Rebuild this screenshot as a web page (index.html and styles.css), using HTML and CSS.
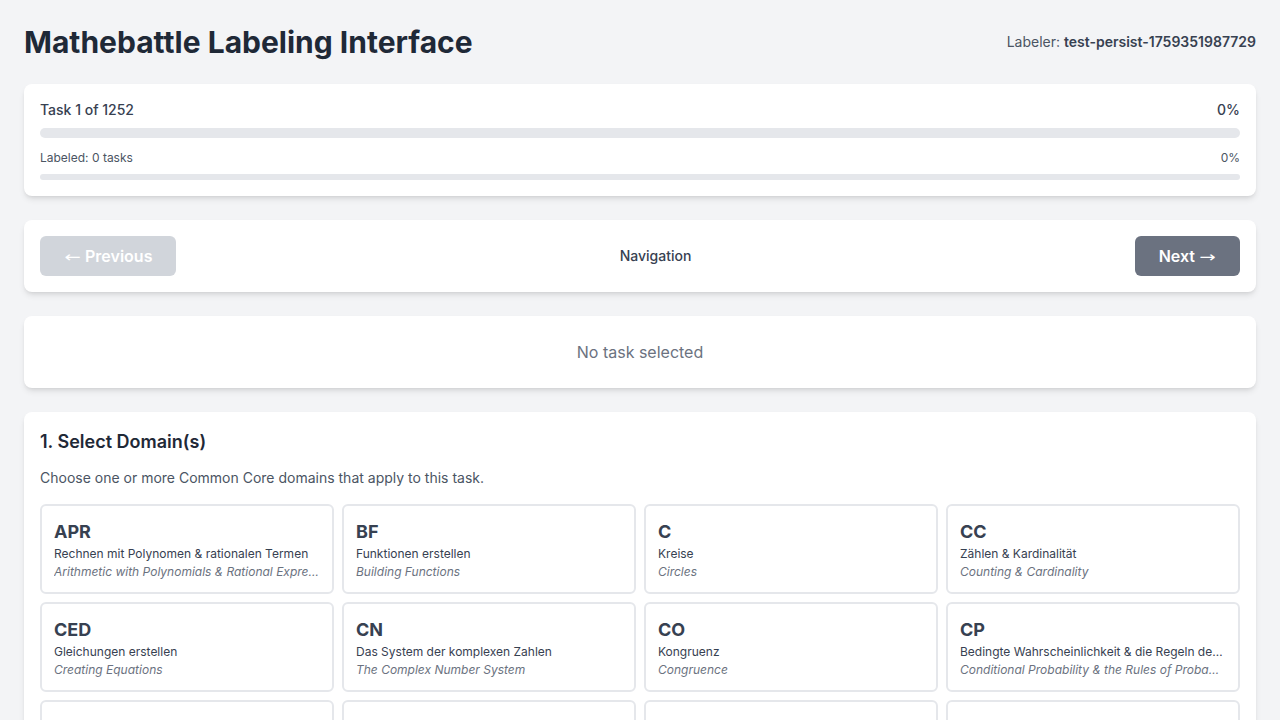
FILE: index.html
```html
<!DOCTYPE html>
<html lang="de">
<head>
<meta charset="utf-8">
<title>Mathebattle Labeling Interface</title>
<link rel="stylesheet" href="styles.css">
</head>
<body>
<div class="page">
  <header class="header">
    <h1 class="title">Mathebattle Labeling Interface</h1>
    <div class="labeler">Labeler: <strong>test-persist-1759351987729</strong></div>
  </header>

  <section class="card progress-card">
    <div class="row main-row"><span>Task 1 of 1252</span><span>0%</span></div>
    <div class="bar bar-main"><div class="fill" style="width:0%"></div></div>
    <div class="row sub-row"><span>Labeled: 0 tasks</span><span>0%</span></div>
    <div class="bar bar-sub"><div class="fill" style="width:0%"></div></div>
  </section>

  <section class="card nav-card">
    <button class="btn btn-prev" disabled><span class="arrow">←</span> Previous</button>
    <span class="nav-label">Navigation</span>
    <button class="btn btn-next">Next <span class="arrow">→</span></button>
  </section>

  <section class="card task-card">
    <p class="empty">No task selected</p>
  </section>

  <section class="card domain-card">
    <h2 class="section-title">1. Select Domain(s)</h2>
    <p class="section-desc">Choose one or more Common Core domains that apply to this task.</p>
    <div class="domain-grid">
      <div class="domain"><div class="code">APR</div><div class="de">Rechnen mit Polynomen &amp; rationalen Termen</div><div class="en">Arithmetic with Polynomials &amp; Rational Expressions</div></div>
      <div class="domain"><div class="code">BF</div><div class="de">Funktionen erstellen</div><div class="en">Building Functions</div></div>
      <div class="domain"><div class="code">C</div><div class="de">Kreise</div><div class="en">Circles</div></div>
      <div class="domain"><div class="code">CC</div><div class="de">Zählen &amp; Kardinalität</div><div class="en">Counting &amp; Cardinality</div></div>
      <div class="domain"><div class="code">CED</div><div class="de">Gleichungen erstellen</div><div class="en">Creating Equations</div></div>
      <div class="domain"><div class="code">CN</div><div class="de">Das System der komplexen Zahlen</div><div class="en">The Complex Number System</div></div>
      <div class="domain"><div class="code">CO</div><div class="de">Kongruenz</div><div class="en">Congruence</div></div>
      <div class="domain"><div class="code">CP</div><div class="de">Bedingte Wahrscheinlichkeit &amp; die Regeln der Wahrscheinlichkeit</div><div class="en">Conditional Probability &amp; the Rules of Probability</div></div>
      <div class="domain"><div class="code">EE</div><div class="de">Ausdrücke &amp; Gleichungen</div><div class="en">Expressions &amp; Equations</div></div>
      <div class="domain"><div class="code">F</div><div class="de">Funktionen</div><div class="en">Functions</div></div>
      <div class="domain"><div class="code">G</div><div class="de">Geometrie</div><div class="en">Geometry</div></div>
      <div class="domain"><div class="code">GMD</div><div class="de">Geometrische Messung &amp; Dimension</div><div class="en">Geometric Measurement &amp; Dimension</div></div>
    </div>
  </section>
</div>
</body>
</html>
```
FILE: styles.css
```css
* { box-sizing: border-box; }
html, body { margin: 0; padding: 0; }
body {
  background: #f3f4f6;
  font-family: Inter, "Noto Sans", "Liberation Sans", sans-serif;
  color: #1f2937;
}
.page {
  padding: 24px;
}
.header {
  display: flex;
  justify-content: space-between;
  align-items: center;
  margin-bottom: 24px;
}
.title {
  margin: 0;
  font-size: 30px;
  line-height: 36px;
  font-weight: 700;
  color: #1f2937;
}
.labeler {
  font-size: 14px;
  line-height: 20px;
  color: #4b5563;
}
.labeler strong {
  font-weight: 600;
  color: #374151;
}
.card {
  background: #fff;
  border-radius: 8px;
  box-shadow: 0 4px 6px -1px rgba(0,0,0,0.1), 0 2px 4px -2px rgba(0,0,0,0.1);
  margin-bottom: 24px;
}
.progress-card {
  padding: 16px;
}
.row {
  display: flex;
  justify-content: space-between;
}
.main-row {
  font-size: 14px;
  line-height: 20px;
  color: #374151;
  font-weight: 500;
}
.sub-row {
  font-size: 12px;
  line-height: 16px;
  color: #4b5563;
  margin-top: 12px;
}
.bar {
  background: #e5e7eb;
  border-radius: 9999px;
  overflow: hidden;
}
.bar-main { height: 10px; margin-top: 8px; }
.bar-sub { height: 6px; margin-top: 8px; }
.fill { height: 100%; background: #3b82f6; }
.nav-card {
  padding: 16px;
  display: flex;
  justify-content: space-between;
  align-items: center;
}
.btn {
  height: 40px;
  padding: 0 24px;
  border: none;
  border-radius: 6px;
  font-family: inherit;
  font-size: 16px;
  font-weight: 600;
  color: #fff;
}
.arrow {
  display: inline-block;
  width: 17px;
  text-align: center;
  font-family: "DejaVu Sans", sans-serif;
  font-weight: 400;
  font-size: 15px;
  transform: scaleX(1.3);
}
.btn-prev { background: #d1d5db; }
.btn-next { background: #6b7280; }
.nav-label {
  font-size: 14px;
  line-height: 20px;
  font-weight: 500;
  color: #374151;
}
.task-card {
  padding: 24px;
}
.empty {
  margin: 0;
  text-align: center;
  font-size: 16px;
  line-height: 24px;
  color: #6b7280;
}
.domain-card {
  padding: 16px;
}
.section-title {
  margin: 0;
  font-size: 18px;
  line-height: 28px;
  font-weight: 600;
  color: #1f2937;
}
.section-desc {
  margin: 12px 0 16px;
  font-size: 14px;
  line-height: 20px;
  color: #4b5563;
}
.domain-grid {
  display: grid;
  grid-template-columns: repeat(4, 1fr);
  gap: 8px;
}
.domain {
  border: 2px solid #e5e7eb;
  border-radius: 6px;
  padding: 13px 12px 12px;
  min-width: 0;
}
.code {
  font-size: 18px;
  line-height: 26px;
  font-weight: 700;
  color: #374151;
}
.de, .en {
  font-size: 12px;
  line-height: 16px;
  white-space: nowrap;
  overflow: hidden;
  text-overflow: ellipsis;
}
.de { color: #374151; margin-top: 1px; }
.en { color: #6b7280; font-style: italic; margin-top: 2px; }
```
